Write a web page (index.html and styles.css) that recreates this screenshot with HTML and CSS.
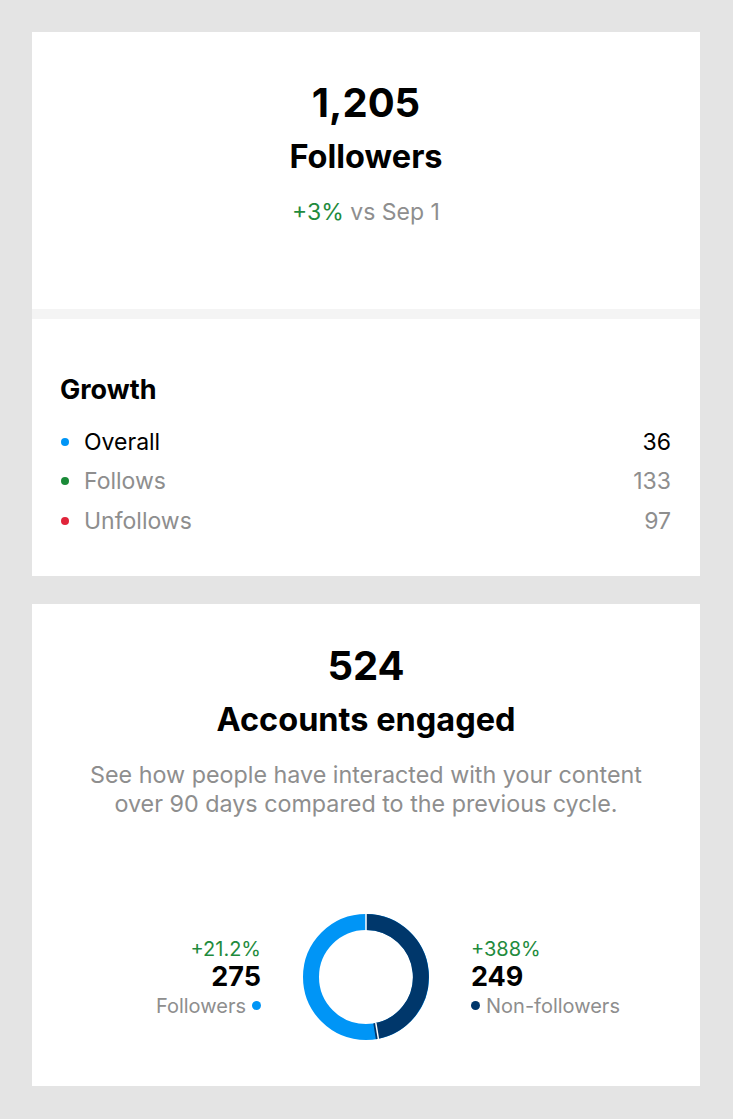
FILE: index.html
```html
<!DOCTYPE html>
<html>
<head>
<meta charset="utf-8">
<link rel="stylesheet" href="styles.css">
</head>
<body>
<div class="page">
  <section class="card">
    <div class="summary">
      <div class="big">1,205</div>
      <div class="title">Followers</div>
      <div class="delta"><span class="green">+3%</span> vs Sep 1</div>
    </div>
    <div class="divider"></div>
    <div class="growth">
      <div class="growth-title">Growth</div>
      <div class="row primary"><span class="dot blue"></span><span class="label">Overall</span><span class="val">36</span></div>
      <div class="row"><span class="dot green-dot"></span><span class="label">Follows</span><span class="val">133</span></div>
      <div class="row"><span class="dot red"></span><span class="label">Unfollows</span><span class="val">97</span></div>
    </div>
  </section>

  <section class="card card2">
    <div class="big">524</div>
    <div class="title">Accounts engaged</div>
    <p class="desc">See how people have interacted with your content<br>over 90 days compared to the previous cycle.</p>
    <div class="chart">
      <div class="side left">
        <div class="pct">+21.2%</div>
        <div class="num">275</div>
        <div class="leg">Followers <span class="ldot blue"></span></div>
      </div>
      <svg class="donut" width="126" height="126" viewBox="0 0 126 126">
        <circle cx="63" cy="63" r="55" fill="none" stroke="#0095f6" stroke-width="16"/>
        <path d="M63 8 A55 55 0 0 1 71.6 117.3" fill="none" stroke="#00376b" stroke-width="16"/>
        <line x1="63" y1="0" x2="63" y2="17" stroke="#fff" stroke-width="1.5"/>
        <line x1="72.8" y1="109.0" x2="75.6" y2="126" stroke="#fff" stroke-width="1.5"/>
      </svg>
      <div class="side right">
        <div class="pct">+388%</div>
        <div class="num">249</div>
        <div class="leg"><span class="ldot navy"></span> Non-followers</div>
      </div>
    </div>
  </section>
</div>
</body>
</html>
```

FILE: styles.css
```css
* { box-sizing: border-box; }
html, body { margin: 0; padding: 0; }
body {
  background: #e4e4e4;
  font-family: Inter, "Noto Sans", "Liberation Sans", sans-serif;
  color: #000;
}
.page {
  padding: 32px 33px 33px 32px;
  display: flex;
  flex-direction: column;
  gap: 28px;
}
.card {
  background: #fff;
  width: 668px;
}
.summary {
  height: 277px;
  padding-top: 47px;
  display: flex;
  flex-direction: column;
  align-items: center;
}
.big {
  font-size: 40px;
  font-weight: 700;
  line-height: 48px;
}
.title {
  font-size: 32.5px;
  font-weight: 700;
  line-height: 36px;
  margin-top: 12px;
}
.delta {
  margin-top: 24px;
  font-size: 23px;
  line-height: 26px;
  color: #8e8e8e;
}
.green { color: #1f8b3d; }
.divider {
  height: 10px;
  background: #f4f4f4;
}
.growth {
  padding: 56px 29px 35px 28px;
}
.growth-title {
  font-size: 27px;
  font-weight: 700;
  line-height: 30px;
  margin-bottom: 17px;
}
.row {
  display: flex;
  align-items: center;
  height: 39.5px;
  font-size: 23px;
  color: #8e8e8e;
}
.row.primary { color: #000; }
.dot {
  width: 8px;
  height: 8px;
  border-radius: 50%;
  margin-left: 1px;
  margin-right: 15px;
}
.blue { background: #0095f6; }
.green-dot { background: #1a8a38; }
.red { background: #e0243a; }
.navy { background: #00376b; }
.label { flex: 1; }
.val { text-align: right; }

.card2 {
  height: 482px;
  padding-top: 38px;
  display: flex;
  flex-direction: column;
  align-items: center;
}
.desc {
  margin: 22px 0 0;
  text-align: center;
  font-size: 23.3px;
  line-height: 29px;
  color: #8e8e8e;
  white-space: nowrap;
}
.chart {
  margin-top: 96px;
  display: flex;
  align-items: center;
  gap: 42px;
}
.side {
  width: 150px;
  display: flex;
  flex-direction: column;
  padding-top: 2px;
}
.side.left { align-items: flex-end; text-align: right; }
.side.right { align-items: flex-start; }
.pct {
  color: #1f8b3d;
  font-size: 20px;
  line-height: 28px;
}
.num {
  font-size: 27px;
  font-weight: 700;
  line-height: 28px;
}
.leg {
  color: #8e8e8e;
  font-size: 20px;
  line-height: 30px;
  display: flex;
  align-items: center;
  gap: 6px;
  white-space: nowrap;
}
.ldot {
  width: 9px;
  height: 9px;
  border-radius: 50%;
  display: inline-block;
}
.donut { display: block; }
```
